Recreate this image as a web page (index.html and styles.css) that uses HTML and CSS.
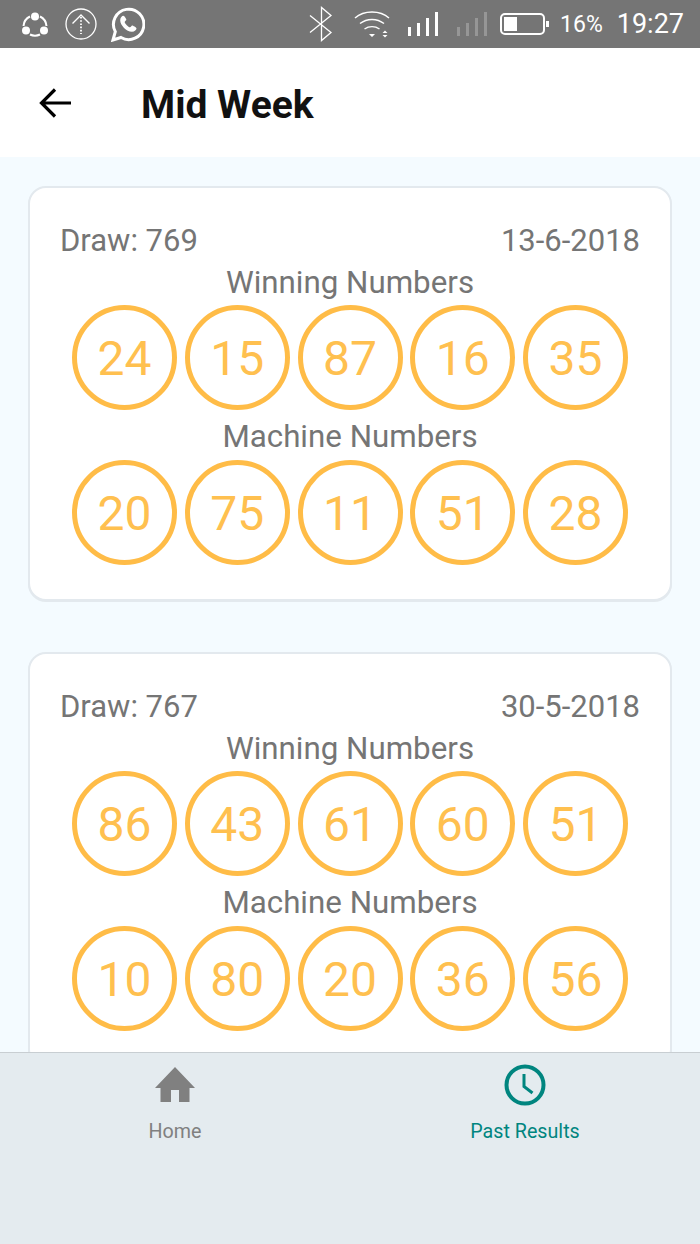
FILE: index.html
```html
<!DOCTYPE html>
<html lang="en">
<head>
    <meta charset="UTF-8">
    <meta name="viewport" content="width=device-width, initial-scale=1.0">
    <title>Mid Week</title>
    <link rel="stylesheet" href="styles.css">
</head>
<body>
<div class="app">
    <section class="status-bar">
        <div class="status-left">
            <svg class="ic-share" width="28" height="28" viewBox="0 0 28 28">
                <path d="M9 6.500A11.500 11.500 0 0 0 2.500 16M9 24.500A11.500 11.500 0 0 0 19 24.500M25.500 16A11.500 11.500 0 0 0 19 6.500" fill="none" stroke="#fff" stroke-width="2"/>
                <circle cx="14" cy="6.500" r="4" fill="#fff"/>
                <circle cx="5" cy="20.500" r="4" fill="#fff"/>
                <circle cx="23" cy="20.500" r="4" fill="#fff"/>
            </svg>
            <svg class="ic-upload" width="32" height="32" viewBox="0 0 32 32">
                <circle cx="16" cy="16" r="15" fill="none" stroke="#fff" stroke-width="1.3"/>
                <path d="M7.500 15.500L16 7l8.500 8.500" fill="none" stroke="#fff" stroke-width="1.4"/>
                <path d="M16 9v17" fill="none" stroke="#fff" stroke-width="1.8" stroke-dasharray="1.6 1.6"/>
            </svg>
            <svg class="ic-whatsapp" width="34" height="35" viewBox="0 0 34 35">
                <path d="M2 33l2.300-8.400A15.200 15.200 0 1 1 10 30.500z" fill="none" stroke="#fff" stroke-width="3"/>
                <path d="M12.200 8.800c-1 0-3 1.600-3 4.400 0 5 6.300 11.600 11.700 11.600 2.800 0 4.600-2 4.600-3.500 0-.8-3.700-2.800-4.300-2.800-.7 0-1.500 1.800-2.200 1.800-1.500 0-5.300-3.800-5.300-5.300 0-.8 1.700-1.400 1.700-2.200 0-.7-2-4-3-4z" fill="#fff"/>
            </svg>
        </div>
        <div class="status-right">
            <svg class="ic-bt" width="24" height="36" viewBox="0 0 24 36">
                <path d="M1 9.500L22 26.500 12.500 34.500V1.500L22 9.500 1 26.500" fill="none" stroke="#fff" stroke-width="1.300"/>
            </svg>
            <svg class="ic-wifi" width="38" height="30" viewBox="0 0 38 30">
                <path d="M1 9C10 1 26 1 35 9M6 14.500C13 9 23 9 30 14.500M10.500 20C15 17 21 17 25.500 20" fill="none" stroke="#fff" stroke-width="1.500"/>
                <path d="M15 25h6l-3 3zM31 21.500l2.500 2.500h-5zM28.500 26h5L31 28.500z" fill="#fff"/>
            </svg>
            <div class="signal">
                <i class="b1"></i><i class="b2"></i><i class="b3"></i><i class="b4"></i>
            </div>
            <div class="signal off">
                <i class="b1"></i><i class="b2"></i><i class="b3"></i><i class="b4"></i>
            </div>
            <div class="battery"><div class="battery-level"></div></div>
            <span class="pct">16%</span>
            <span class="clock">19:27</span>
        </div>
    </section>

    <section class="header">
        <svg class="back" width="32" height="30" viewBox="0 0 32 30">
            <path d="M32 15H3M16 1.500L2.500 15 16 28.500" fill="none" stroke="#000" stroke-width="3.200"/>
        </svg>
        <div class="title">Mid Week</div>
    </section>

    <section class="results">
        <div class="card">
            <div class="card-top"><span>Draw: 769</span><span>13-6-2018</span></div>
            <div class="label">Winning Numbers</div>
            <div class="balls">
                <div class="ball">24</div><div class="ball">15</div><div class="ball">87</div><div class="ball">16</div><div class="ball">35</div>
            </div>
            <div class="label machine">Machine Numbers</div>
            <div class="balls">
                <div class="ball">20</div><div class="ball">75</div><div class="ball">11</div><div class="ball">51</div><div class="ball">28</div>
            </div>
        </div>
        <div class="card">
            <div class="card-top"><span>Draw: 767</span><span>30-5-2018</span></div>
            <div class="label">Winning Numbers</div>
            <div class="balls">
                <div class="ball">86</div><div class="ball">43</div><div class="ball">61</div><div class="ball">60</div><div class="ball">51</div>
            </div>
            <div class="label machine">Machine Numbers</div>
            <div class="balls">
                <div class="ball">10</div><div class="ball">80</div><div class="ball">20</div><div class="ball">36</div><div class="ball">56</div>
            </div>
        </div>
    </section>

    <section class="tabs">
        <div class="tab">
            <svg width="42" height="42" viewBox="0 0 42 42">
                <path d="M21 3L1 24h5.500v14H17V26h8v12h10.500V24H41z" fill="#808080"/>
            </svg>
            <div class="tab-label">Home</div>
        </div>
        <div class="tab active">
            <svg width="42" height="42" viewBox="0 0 42 42">
                <circle cx="21" cy="21" r="18.500" fill="none" stroke="#00857f" stroke-width="4"/>
                <path d="M20 10v12.500l8.500 6.500" fill="none" stroke="#00857f" stroke-width="3"/>
            </svg>
            <div class="tab-label">Past Results</div>
        </div>
    </section>
</div>
</body>
</html>
```

FILE: styles.css
```css
*{
    margin:0;padding:0;box-sizing:border-box;font-family:Roboto,"Liberation Sans",sans-serif;
}
body{
    background-color:#f4fbff;
}
.app{
    height:100vh;
    display:flex;
    flex-direction:column;
    overflow:hidden;
}
.status-bar{
    height:48px;
    flex:none;
    background-color:#757575;
    color:#fff;
    display:flex;
    justify-content:space-between;
    align-items:center;
    padding:0 16px 0 21px;
}
.status-left,.status-right{
    display:flex;
    align-items:center;
}
.ic-upload{
    margin-left:16px;
}
.ic-whatsapp{
    margin-left:14px;
}
.ic-wifi{
    margin-left:21px;
}
.signal{
    display:flex;
    align-items:flex-end;
    gap:6px;
    height:24px;
    margin-left:16px;
}
.signal i{
    display:block;
    width:3px;
    background-color:#fff;
}
.signal.off{
    margin-left:19px;
}
.signal.off i{
    background-color:#969696;
}
.b1{height:9px;}
.b2{height:13px;}
.b3{height:18px;}
.b4{height:24px;}
.battery{
    width:45px;
    height:22px;
    margin-left:13px;
    border:2px solid #fff;
    border-radius:5px;
    padding:2px;
    position:relative;
}
.battery:after{
    content:"";
    position:absolute;
    right:-6px;
    top:6px;
    width:3px;
    height:6px;
    background-color:#fff;
}
.battery-level{
    width:13px;
    height:100%;
    background-color:#fff;
}
.pct{
    font-size:23px;
    margin-left:15px;
}
.clock{
    font-size:27px;
    margin-left:14px;
}
.header{
    height:109px;
    flex:none;
    background-color:#fff;
    display:flex;
    align-items:center;
    padding-left:39px;
}
.title{
    font-size:39px;
    font-weight:700;
    color:#111;
    margin-left:70px;
    padding-top:4px;
}
.results{
    flex:1;
    min-height:0;
    overflow:hidden;
    padding:29px 28px 0 28px;
}
.card{
    width:644px;
    height:415px;
    background-color:#fff;
    border:2px solid #e3e9ee;
    border-radius:18px;
    box-shadow:0 1px 0 #e3e9ee;
    padding:36px 30px 0 30px;
    margin-bottom:51px;
    color:#757575;
    font-size:31px;
}
.card-top{
    display:flex;
    justify-content:space-between;
    line-height:34px;
}
.label{
    text-align:center;
    line-height:34px;
    margin-top:8px;
    font-size:31.300px;
}
.label.machine{
    margin-top:10px;
}
.balls{
    display:flex;
    justify-content:center;
    gap:7.750px;
    margin-top:5px;
}
.label.machine + .balls{
    margin-top:6px;
}
.ball{
    width:105px;
    height:105px;
    border:5px solid #ffbc47;
    border-radius:50%;
    color:#ffc04f;
    font-size:48px;
    padding-top:2px;
    display:flex;
    align-items:center;
    justify-content:center;
}
.tabs{
    height:192px;
    flex:none;
    background-color:#e4ebef;
    border-top:1px solid #c8ced2;
    display:flex;
}
.tab{
    flex:1;
    display:flex;
    flex-direction:column;
    align-items:center;
    padding-top:11px;
    color:#808080;
}
.tab.active{
    color:#00857f;
}
.tab-label{
    font-size:19.700px;
    line-height:22px;
    margin-top:15px;
}
```
